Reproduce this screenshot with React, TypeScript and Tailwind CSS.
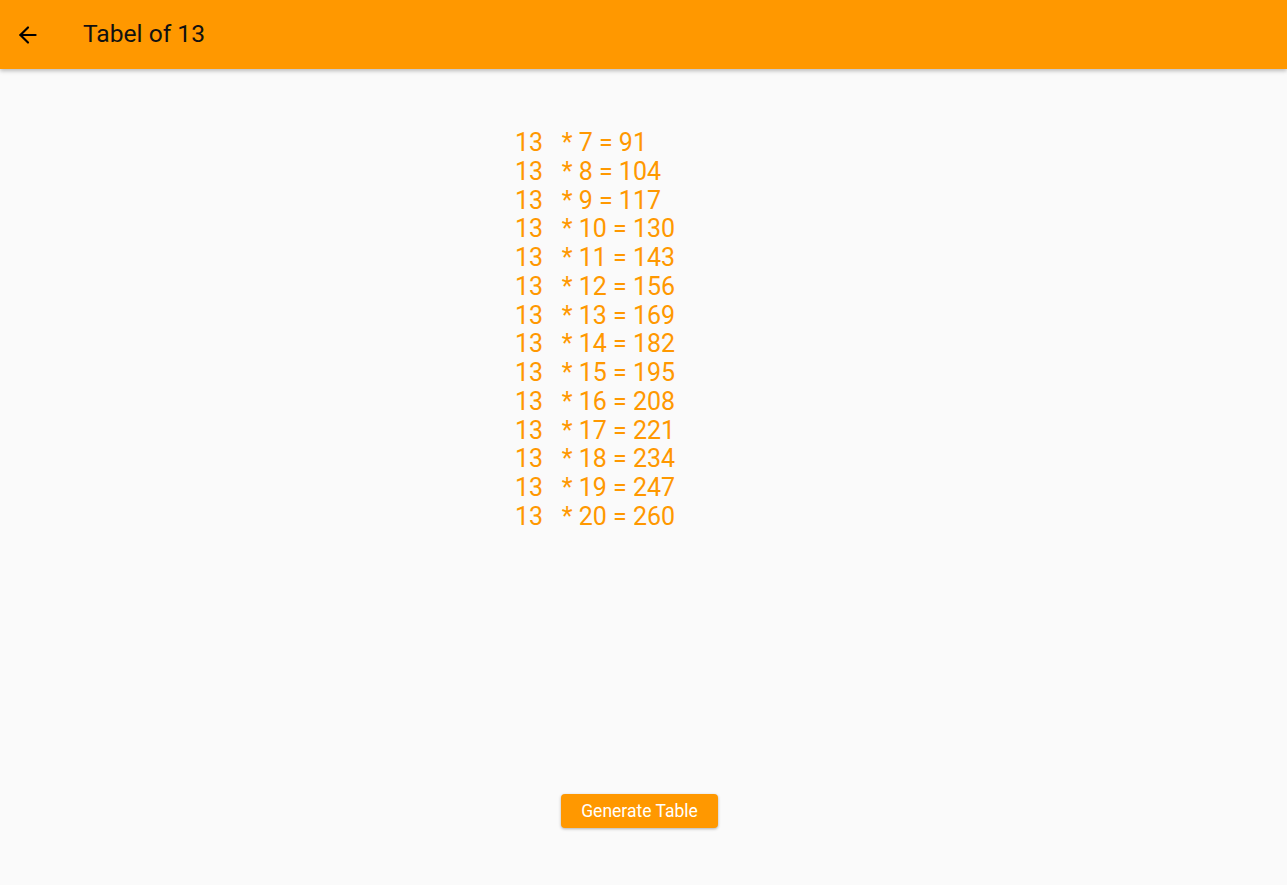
import { ArrowLeft } from 'lucide-react'

const rows = Array.from({ length: 14 }, (_, i) => i + 7)

const App = () => {
  return (
    <div
      className="h-screen flex flex-col bg-[#fafafa] overflow-hidden"
      style={{ fontFamily: 'Roboto, "Noto Sans", sans-serif' }}
    >
      {/* App bar */}
      <header className="h-[69px] shrink-0 bg-[#ff9800] flex items-center shadow-[0_2px_4px_rgba(0,0,0,0.25)] z-10">
        <button className="w-[54px] h-full flex items-center justify-center pl-[1px] text-black">
          <ArrowLeft size={26} strokeWidth={2} />
        </button>
        <h1 className="ml-[29px] text-[24.6px] text-[#111] leading-none">Tabel of 13</h1>
      </header>

      {/* Table */}
      <main className="flex-1 flex flex-col">
        <div className="mx-auto w-[257px] mt-[60px]">
          {rows.map((n) => (
            <div key={n} className="text-[25px] leading-[28.77px] text-[#ff9800] whitespace-pre">
              {`13   * ${n} = ${13 * n}`}
            </div>
          ))}
        </div>

        <div className="flex-1" />

        <div className="flex justify-center pb-[57px] pr-[8px]">
          <button className="h-[34px] w-[157px] rounded-[4px] bg-[#ff9800] text-white text-[17.5px] font-normal shadow-[0_1px_3px_rgba(0,0,0,0.3)]">
            Generate Table
          </button>
        </div>
      </main>
    </div>
  )
}

export default App
